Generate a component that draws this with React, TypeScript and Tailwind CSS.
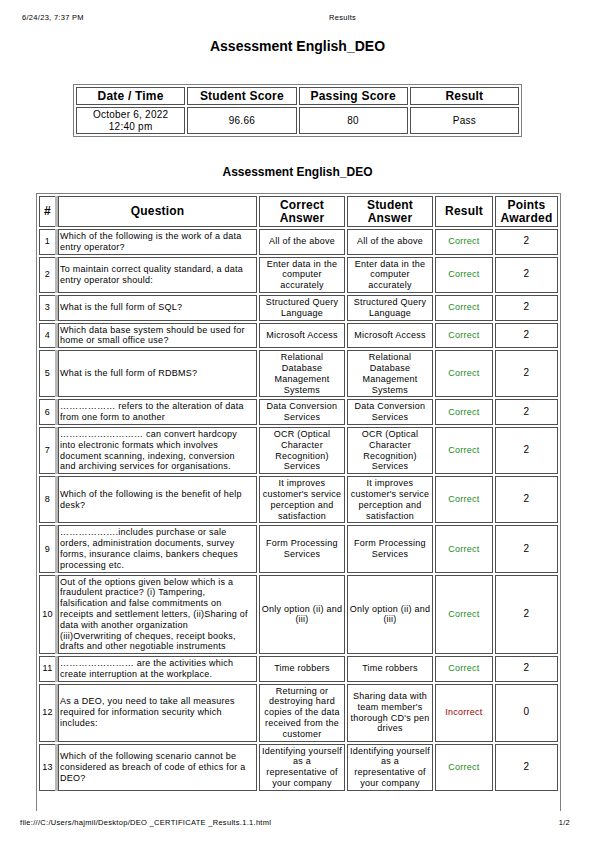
import React from 'react';

interface Row {
  q: string;
  correct: string;
  student: string;
  ok: boolean;
  points: number;
}

const rows: Row[] = [
  { q: 'Which of the following is the work of a data entry operator?', correct: 'All of the above', student: 'All of the above', ok: true, points: 2 },
  { q: 'To maintain correct quality standard, a data entry operator should:', correct: 'Enter data in the computer accurately', student: 'Enter data in the computer accurately', ok: true, points: 2 },
  { q: 'What is the full form of SQL?', correct: 'Structured Query Language', student: 'Structured Query Language', ok: true, points: 2 },
  { q: 'Which data base system should be used for home or small office use?', correct: 'Microsoft Access', student: 'Microsoft Access', ok: true, points: 2 },
  { q: 'What is the full form of RDBMS?', correct: 'Relational Database Management Systems', student: 'Relational Database Management Systems', ok: true, points: 2 },
  { q: '\u2026\u2026\u2026\u2026\u2026\u2026 refers to the alteration of data from one form to another', correct: 'Data Conversion Services', student: 'Data Conversion Services', ok: true, points: 2 },
  { q: '\u2026\u2026\u2026\u2026\u2026\u2026\u2026\u2026\u2026 can convert hardcopy into electronic formats which involves document scanning, indexing, conversion\nand archiving services for organisations.', correct: 'OCR (Optical Character Recognition) Services', student: 'OCR (Optical Character Recognition) Services', ok: true, points: 2 },
  { q: 'Which of the following is the benefit of help desk?', correct: "It improves customer's service perception and satisfaction", student: "It improves customer's service perception and satisfaction", ok: true, points: 2 },
  { q: '\u2026\u2026\u2026\u2026\u2026\u2026.includes purchase or sale orders, administration documents, survey forms, insurance claims, bankers cheques processing etc.', correct: 'Form Processing Services', student: 'Form Processing Services', ok: true, points: 2 },
  { q: 'Out of the options given below which is a fraudulent practice? (i) Tampering, falsification and false commitments on receipts and settlement letters, (ii)Sharing of data with another organization\n(iii)Overwriting of cheques, receipt books, drafts and other negotiable instruments', correct: 'Only option (ii) and (iii)', student: 'Only option (ii) and (iii)', ok: true, points: 2 },
  { q: '\u2026\u2026\u2026\u2026\u2026\u2026\u2026\u2026 are the activities which create interruption at the workplace.', correct: 'Time robbers', student: 'Time robbers', ok: true, points: 2 },
  { q: 'As a DEO, you need to take all measures required for information security which includes:', correct: 'Returning or destroying hard copies of the data received from the customer', student: "Sharing data with team member's thorough CD's pen drives", ok: false, points: 0 },
  { q: 'Which of the following scenario cannot be considered as breach of code of ethics for a DEO?', correct: 'Identifying yourself\nas a\nrepresentative of\nyour company', student: 'Identifying yourself\nas a\nrepresentative of\nyour company', ok: true, points: 2 },
];

// cell border look of an old border="1" table
const cell = 'border border-[#505050] p-px align-middle';
const head = `${cell} text-[12px] font-bold leading-[13px] tracking-[0.2px] text-center`;
const body = `${cell} text-[9px] leading-[10.8px] tracking-[0.25px] text-center whitespace-pre-line`;

export default function App() {
  return (
    <div className="w-[595px] h-[842px] bg-white text-black font-['Liberation_Sans',Arial,sans-serif] overflow-hidden">
      {/* print header */}
      <div className="flex pt-[13px] px-[22px] text-[7.5px] leading-[9px] tracking-[0.3px]">
        <span className="w-[307px]">6/24/23, 7:37 PM</span>
        <span>Results</span>
      </div>

      <h1 className="mt-[16px] text-center text-[14px] leading-[16px] font-bold">Assessment English_DEO</h1>

      {/* summary */}
      <table className="mt-[30px] mx-auto w-[449px] table-fixed border-separate border-spacing-[2px] border border-[#808080]">
        <thead>
          <tr>
            <th className={`${head} h-[18px]`}>Date / Time</th>
            <th className={head}>Student Score</th>
            <th className={head}>Passing Score</th>
            <th className={head}>Result</th>
          </tr>
        </thead>
        <tbody>
          <tr>
            <td className={`${cell} text-[10px] leading-[11.5px] tracking-[0.25px] text-center`}>
              October 6, 2022
              <br />
              12:40 pm
            </td>
            <td className={`${cell} text-[10px] tracking-[0.25px] text-center`}>96.66</td>
            <td className={`${cell} text-[10px] tracking-[0.25px] text-center`}>80</td>
            <td className={`${cell} text-[10px] tracking-[0.25px] text-center`}>Pass</td>
          </tr>
        </tbody>
      </table>

      <h2 className="mt-[28px] text-center text-[12px] leading-[14px] font-bold">Assessment English_DEO</h2>

      {/* question table, cut by the page break */}
      <div className="mt-[14px] ml-[36px] w-[525px] h-[618px] border-x border-t border-[#808080] overflow-hidden">
        <table className="w-full table-fixed border-separate border-spacing-[2px]">
          <colgroup>
            <col className="w-[17px]" />
            <col className="w-[199px]" />
            <col className="w-[86px]" />
            <col className="w-[86px]" />
            <col className="w-[58px]" />
            <col className="w-[63px]" />
          </colgroup>
          <thead>
            <tr>
              <th className={`${head} h-[31px]`}>#</th>
              <th className={`${head} shadow-[-3px_0_0_#b8b8b8]`}>Question</th>
              <th className={head}>
                Correct
                <br />
                Answer
              </th>
              <th className={head}>
                Student
                <br />
                Answer
              </th>
              <th className={head}>Result</th>
              <th className={head}>
                Points
                <br />
                Awarded
              </th>
            </tr>
          </thead>
          <tbody>
            {rows.map((r, i) => (
              <tr key={i}>
                <td className={body}>{i + 1}</td>
                <td className={`${body} !text-left shadow-[-3px_0_0_#b8b8b8]`}>{r.q}</td>
                <td className={body}>{r.correct}</td>
                <td className={body}>{r.student}</td>
                <td className={`${body} ${r.ok ? 'text-[#1a8c1a]' : 'text-[#9b0000]'}`}>{r.ok ? 'Correct' : 'Incorrect'}</td>
                <td className={`${body} text-[10px]`}>{r.points}</td>
              </tr>
            ))}
          </tbody>
        </table>
      </div>

      {/* print footer */}
      <div className="flex justify-between mt-[7px] pl-[20px] pr-[25px] text-[7.5px] leading-[9px] tracking-[0.3px]">
        <span>file:///C:/Users/hajmil/Desktop/DEO _CERTIFICATE _Results.1.1.html</span>
        <span>1/2</span>
      </div>
    </div>
  );
}
